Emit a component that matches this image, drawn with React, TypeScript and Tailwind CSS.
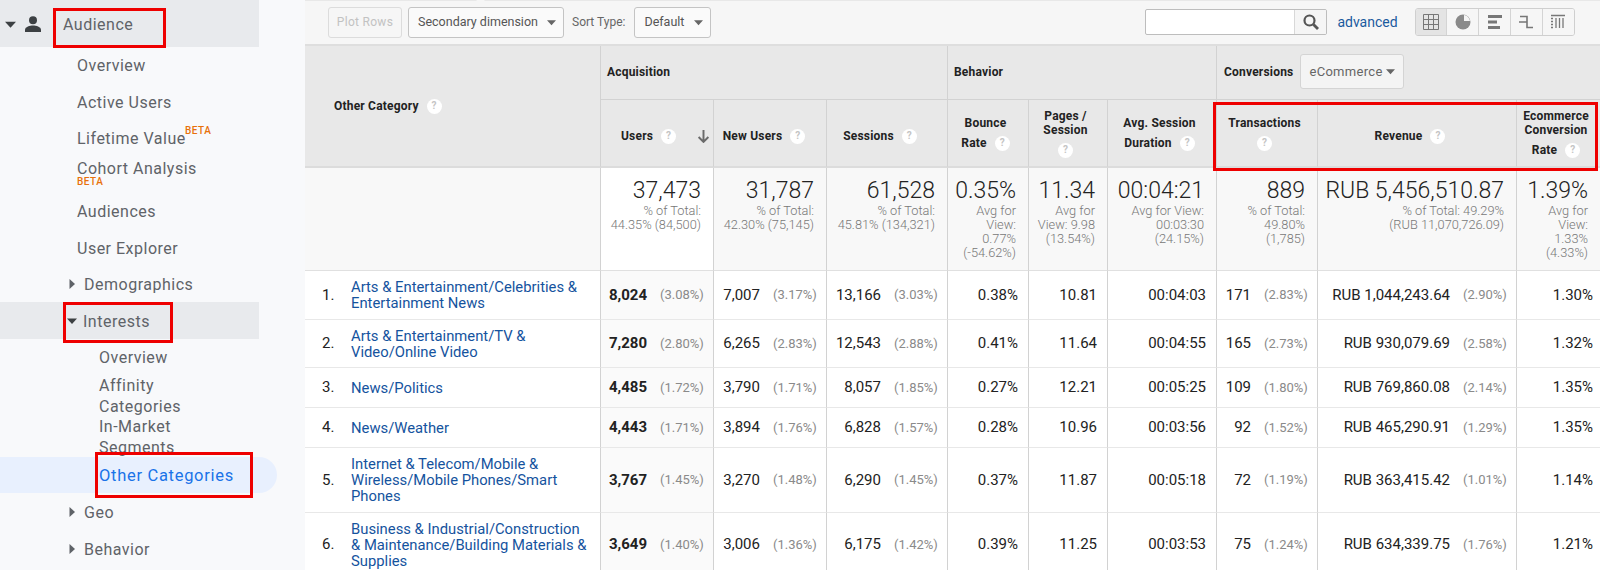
const font = { fontFamily: "Roboto, sans-serif" };

function Caret({ dir = "down", className = "" }: { dir?: "down" | "right"; className?: string }) {
  return (
    <svg viewBox="0 0 10 10" className={className} fill="currentColor" aria-hidden="true">
      {dir === "down" ? <path d="M0 2.5h10L5 8z" /> : <path d="M2.5 0v10L8 5z" />}
    </svg>
  );
}

function Help() {
  return (
    <span className="inline-flex h-[15px] w-[15px] shrink-0 items-center justify-center rounded-full bg-white text-[10px] font-bold leading-none text-[#c4c4c4]">
      ?
    </span>
  );
}

function NavRow({
  h,
  pl,
  caret,
  active,
  band,
  children,
}: {
  h: string;
  pl: string;
  caret?: "down" | "right";
  active?: boolean;
  band?: boolean;
  children: React.ReactNode;
}) {
  return (
    <div
      className={`relative flex items-center pt-[2px] ${h} ${pl} ${band ? "w-[259px] bg-[#e8eaed]" : ""} ${
        active ? "w-[277px] rounded-r-full bg-[#e8f0fe] text-[16.500px] tracking-[0.7px] text-[#1a73e8]" : ""
      }`}
    >
      {caret && (
        <Caret
          dir={caret}
          className={`absolute left-[67px] top-1/2 h-[10px] w-[10px] -translate-y-1/2 ${
            caret === "down" ? "text-[#3c4043]" : "text-[#5f6368]"
          }`}
        />
      )}
      {children}
    </div>
  );
}

function Sidebar() {
  return (
    <aside className="relative h-[570px] w-[305px] shrink-0 bg-[#f8f9fb] text-[16px] tracking-[0.5px] text-[#5f6368]" style={font}>
      <NavRow h="h-[47px]" pl="pl-[63px]" band>
        <Caret className="absolute left-[5px] top-[19px] h-[11px] w-[11px] text-[#3c4043]" />
        <svg viewBox="0 0 16 16" className="absolute left-[25px] top-[16px] h-[16px] w-[16px] text-[#3c4043]" fill="currentColor">
          <circle cx="8" cy="4.2" r="4" />
          <path d="M0 16v-2.2C0 11 5 9.6 8 9.6s8 1.4 8 4.2V16z" />
        </svg>
        Audience
      </NavRow>
      <NavRow h="h-[36px]" pl="pl-[77px]">Overview</NavRow>
      <NavRow h="h-[37px]" pl="pl-[77px]">Active Users</NavRow>
      <NavRow h="h-[36px]" pl="pl-[77px]">
        Lifetime Value
        <span className="absolute left-[185px] top-[5px] text-[10px] font-medium leading-[12px] text-[#e8710a]">BETA</span>
      </NavRow>
      <div className="h-[37px] pl-[77px] pt-[3px]">
        <div className="leading-[20px]">Cohort Analysis</div>
        <div className="text-[10px] font-medium leading-[6px] text-[#e8710a]">BETA</div>
      </div>
      <NavRow h="h-[36px]" pl="pl-[77px]">Audiences</NavRow>
      <NavRow h="h-[37px]" pl="pl-[77px]">User Explorer</NavRow>
      <NavRow h="h-[36px]" pl="pl-[84px]" caret="right">Demographics</NavRow>
      <NavRow h="h-[37px]" pl="pl-[83px]" caret="down" band>Interests</NavRow>
      <NavRow h="h-[36px]" pl="pl-[99px]">Overview</NavRow>
      <div className="h-[82px] pl-[99px] pt-[1px] leading-[20.5px]">
        <div>Affinity</div>
        <div>Categories</div>
        <div>In-Market</div>
        <div>Segments</div>
      </div>
      <NavRow h="h-[36px]" pl="pl-[99px]" active>Other Categories</NavRow>
      <NavRow h="h-[37px]" pl="pl-[84px]" caret="right">Geo</NavRow>
      <NavRow h="h-[37px]" pl="pl-[84px]" caret="right">Behavior</NavRow>
      <span className="absolute left-[53px] top-[8px] h-[40px] w-[113px] border-[3px] border-[#ee0000]" />
      <span className="absolute left-[63px] top-[302px] h-[41px] w-[110px] border-[3px] border-[#ee0000]" />
      <span className="absolute left-[95px] top-[452px] h-[46px] w-[158px] border-[3px] border-[#ee0000]" />
    </aside>
  );
}

function Select({ label, width }: { label: string; width: string }) {
  return (
    <div className={`flex h-[31px] ${width} items-center justify-between whitespace-nowrap rounded-[3px] border border-[#c4c4c4] bg-[#fafafa] pl-[9px] pr-[7px] text-[12.500px] text-[#555]`}>
      {label}
      <Caret className="h-[9px] w-[9px] text-[#666]" />
    </div>
  );
}

function ViewIcon({ i }: { i: number }) {
  const c = "#777";
  return (
    <svg viewBox="0 0 16 16" className="h-[16px] w-[16px]" fill="none" stroke={c} strokeWidth="1">
      {i === 0 && <path d="M.5.5h15v15H.5zM5.5.5v15M10.5.5v15M.5 5.5h15M.5 10.5h15" />}
      {i === 1 && (
        <>
          <circle cx="8" cy="8" r="7.5" fill="#8a8a8a" stroke="none" />
          <path d="M9 7V1a6.500 6.500 0 0 1 6 6z" fill="#f4f4f4" stroke="none" />
        </>
      )}
      {i === 2 && <path d="M1 2.500h14M1 8h9M1 13.500h12" strokeWidth="3" />}
      {i === 3 && <path d="M2 2.500h7v11h6M9 8H1" strokeWidth="1.600" />}
      {i === 4 && <path d="M1 1.500h14M1 4.500h2M1 7.500h2M1 10.500h2M1 13.500h2M6 4v10M9.500 4v10M13 4v10" strokeWidth="1.300" />}
    </svg>
  );
}

function Toolbar() {
  return (
    <div className="relative flex h-[46px] items-center border-b-2 border-t border-b-[#dedede] border-t-[#e8e8e8] bg-[#f6f6f6] pb-[1px] pl-[23px]">
      <span className="absolute left-[172px] top-[-5px] h-[7px] w-[7px] rotate-45 bg-[#f6f6f6]" />
      <div className="flex h-[31px] w-[74px] items-center justify-center rounded-[3px] border border-[#dcdcdc] text-[12px] tracking-[0.3px] text-[#c2c2c2]">
        Plot Rows
      </div>
      <div className="ml-[6px]">
        <Select label="Secondary dimension" width="w-[156px]" />
      </div>
      <span className="ml-[8px] text-[12px] text-[#666]">Sort Type:</span>
      <div className="ml-[9px]">
        <Select label="Default" width="w-[77px]" />
      </div>
      <div className="ml-[434px] flex h-[26px] w-[182px] overflow-hidden rounded-[2px] border border-[#bdbdbd] bg-white">
        <div className="flex-1" />
        <div className="flex w-[32px] items-center justify-center border-l border-[#d8d8d8] bg-[#f5f5f5]">
          <svg viewBox="0 0 16 16" className="h-[16px] w-[16px]" fill="none" stroke="#555" strokeWidth="2.200">
            <circle cx="6.500" cy="6.500" r="5" />
            <path d="M10.500 10.500L15 15" strokeWidth="2.800" />
          </svg>
        </div>
      </div>
      <span className="ml-[10px] text-[14px] text-[#1a5a9e]">advanced</span>
      <div className="ml-[17px] flex h-[28px] w-[160px] overflow-hidden rounded-[3px] border border-[#cfcfcf]">
        {[0, 1, 2, 3, 4].map((i) => (
          <div key={i} className={`flex flex-1 items-center justify-center border-l border-[#d4d4d4] first:border-l-0 ${i === 0 ? "bg-[#e4e4e4]" : "bg-[#f6f6f6]"}`}>
            <ViewIcon i={i} />
          </div>
        ))}
      </div>
    </div>
  );
}

const rows = [
  ["Arts & Entertainment/Celebrities & Entertainment News", "8,024", "(3.08%)", "7,007", "(3.17%)", "13,166", "(3.03%)", "0.38%", "10.81", "00:04:03", "171", "(2.83%)", "RUB 1,044,243.64", "(2.90%)", "1.30%", "h-[49px]"],
  ["Arts & Entertainment/TV & Video/Online Video", "7,280", "(2.80%)", "6,265", "(2.83%)", "12,543", "(2.88%)", "0.41%", "11.64", "00:04:55", "165", "(2.73%)", "RUB 930,079.69", "(2.58%)", "1.32%", "h-[48px]"],
  ["News/Politics", "4,485", "(1.72%)", "3,790", "(1.71%)", "8,057", "(1.85%)", "0.27%", "12.21", "00:05:25", "109", "(1.80%)", "RUB 769,860.08", "(2.14%)", "1.35%", "h-[40px]"],
  ["News/Weather", "4,443", "(1.71%)", "3,894", "(1.76%)", "6,828", "(1.57%)", "0.28%", "10.96", "00:03:56", "92", "(1.52%)", "RUB 465,290.91", "(1.29%)", "1.35%", "h-[40px]"],
  ["Internet & Telecom/Mobile & Wireless/Mobile Phones/Smart Phones", "3,767", "(1.45%)", "3,270", "(1.48%)", "6,290", "(1.45%)", "0.37%", "11.87", "00:05:18", "72", "(1.19%)", "RUB 363,415.42", "(1.01%)", "1.14%", "h-[65px]"],
  ["Business & Industrial/Construction & Maintenance/Building Materials & Supplies", "3,649", "(1.40%)", "3,006", "(1.36%)", "6,175", "(1.42%)", "0.39%", "11.25", "00:03:53", "75", "(1.24%)", "RUB 634,339.75", "(1.76%)", "1.21%", "h-[64px]"],
];

const totals = [
  ["37,473", ["% of Total:", "44.35% (84,500)"]],
  ["31,787", ["% of Total:", "42.30% (75,145)"]],
  ["61,528", ["% of Total:", "45.81% (134,321)"]],
  ["0.35%", ["Avg for", "View:", "0.77%", "(-54.62%)"]],
  ["11.34", ["Avg for", "View: 9.98", "(13.54%)"]],
  ["00:04:21", ["Avg for View:", "00:03:30", "(24.15%)"]],
  ["889", ["% of Total:", "49.80%", "(1,785)"]],
  ["RUB 5,456,510.87", ["% of Total: 49.29%", "(RUB 11,070,726.09)"]],
  ["1.39%", ["Avg for", "View:", "1.33%", "(4.33%)"]],
] as [string, string[]][];

const th = "border-l border-[#d2d2d2] bg-[#e8e8e8] align-middle text-[12px] font-bold leading-[14px] tracking-[0.2px] text-[#222]";

function Pair({ v, p, shade }: { v: string; p: string; shade?: boolean }) {
  return (
    <td className={`border-b border-l border-b-[#e8e8e8] border-l-[#d2d2d2] pr-[10px] ${shade ? "bg-[#fafafa] font-bold" : "bg-white"}`}>
      <div className="flex items-center justify-end gap-[13px]">
        <span>{v}</span>
        <span className="w-[43px] text-right text-[13px] font-normal text-[#8a8a8a]">{p}</span>
      </div>
    </td>
  );
}

function Val({ v, last }: { v: string; last?: boolean }) {
  return (
    <td className={`border-b border-l border-b-[#e8e8e8] border-l-[#d2d2d2] bg-white text-right ${last ? "pr-[7px]" : "pr-[10px]"}`}>
      {v}
    </td>
  );
}

function Table() {
  return (
    <table className="w-[1295px] table-fixed border-separate border-spacing-0 text-[15px] text-[#222]">
      <colgroup>
        {[295, 113, 113, 121, 81, 79, 109, 101, 199, 84].map((w, i) => (
          <col key={i} style={{ width: w }} />
        ))}
      </colgroup>
      <thead>
        <tr className="h-[54px]">
          <th rowSpan={2} className={`${th} border-b-2 border-l-0 border-b-[#dcdcdc] pl-[29px] text-left`}>
            <div className="flex items-center gap-[8px]">
              Other Category
              <Help />
            </div>
          </th>
          <th colSpan={3} className={`${th} border-b pb-[2px] pl-[6px] text-left`}>Acquisition</th>
          <th colSpan={3} className={`${th} border-b pb-[2px] pl-[6px] text-left`}>Behavior</th>
          <th colSpan={3} className={`${th} border-b pb-[2px] pl-[7px] text-left`}>
            <div className="flex items-center gap-[7px]">
              Conversions
              <div className="flex h-[35px] w-[104px] items-center justify-between rounded-[3px] border border-[#d4d4d4] bg-[#f4f4f4] pl-[8px] pr-[8px] text-[13px] font-normal tracking-[0.3px] text-[#666]">
                eCommerce
                <Caret className="h-[9px] w-[9px] text-[#666]" />
              </div>
            </div>
          </th>
        </tr>
        <tr className="h-[68px]">
          <th className={`${th} border-b-2 border-b-[#dcdcdc] pt-[6px]`}>
            <div className="flex items-center pl-[20px]">
              Users
              <span className="ml-[8px]"><Help /></span>
              <svg viewBox="0 0 12 12" className="ml-[21px] h-[13px] w-[13px]" fill="none" stroke="#6b6b6b" strokeWidth="1.800">
                <path d="M6 0v11M1.500 6.500L6 11l4.500-4.500" />
              </svg>
            </div>
          </th>
          {[
            ["New Users", "pr-[12px]"],
            ["Sessions", "pr-[14px]"],
          ].map(([t, pr]) => (
            <th key={t} className={`${th} border-b-2 border-b-[#dcdcdc] pt-[6px] ${pr}`}>
              <div className="flex items-center justify-center gap-[8px]">
                {t}
                <Help />
              </div>
            </th>
          ))}
          {[
            [["Bounce"], "Rate"],
            [["Pages /", "Session"], ""],
            [["Avg. Session"], "Duration"],
            [["Transactions"], ""],
          ].map(([l, last]) => (
            <th key={(l as string[])[0]} className={`${th} border-b-2 border-b-[#dcdcdc] pr-[5px]`}>
              <div className="flex flex-col items-center">
                {(l as string[]).map((x) => <div key={x}>{x}</div>)}
                <div className="mt-[6px] flex items-center gap-[8px]">
                  {last as string}
                  <Help />
                </div>
              </div>
            </th>
          ))}
          <th className={`${th} border-b-2 border-b-[#dcdcdc] pr-[14px] pt-[6px]`}>
            <div className="flex items-center justify-center gap-[8px]">
              Revenue
              <Help />
            </div>
          </th>
          <th className={`${th} border-b-2 border-b-[#dcdcdc] pr-[5px]`}>
            <div className="flex flex-col items-center">
              <div>Ecommerce</div>
              <div>Conversion</div>
              <div className="mt-[6px] flex items-center gap-[8px]">
                Rate
                <Help />
              </div>
            </div>
          </th>
        </tr>
      </thead>
      <tbody>
        <tr className="h-[103px]">
          <td className="border-b border-b-[#e0e0e0] bg-[#f8f8f8]" />
          {totals.map(([big, small], i) => (
            <td key={big} className={`border-b border-l border-b-[#e0e0e0] border-l-[#d2d2d2] pr-[12px] pt-[10px] text-right align-top ${i === 0 ? "bg-white" : "bg-[#f8f8f8]"}`}>
              <div className="text-[23px] font-light leading-[26px] text-[#222]">{big}</div>
              {small.map((s) => (
                <div key={s} className="text-[12.800px] font-light leading-[14px] text-[#777]">{s}</div>
              ))}
            </td>
          ))}
        </tr>
        {rows.map((r, i) => (
          <tr key={r[0]} className={r[15]}>
            <td className="border-b border-b-[#e8e8e8] bg-white">
              <div className="flex items-center">
                <span className="w-[46px] pl-[17px]">{i + 1}.</span>
                <a className="w-[240px] text-[14.800px] leading-[16px] text-[#15539e]">{r[0]}</a>
              </div>
            </td>
            <Pair v={r[1]} p={r[2]} shade />
            <Pair v={r[3]} p={r[4]} />
            <Pair v={r[5]} p={r[6]} />
            <Val v={r[7]} />
            <Val v={r[8]} />
            <Val v={r[9]} />
            <Pair v={r[10]} p={r[11]} />
            <Pair v={r[12]} p={r[13]} />
            <Val v={r[14]} last />
          </tr>
        ))}
      </tbody>
    </table>
  );
}

export default function App() {
  return (
    <div className="relative flex h-[570px] w-[1600px] overflow-hidden bg-white" style={font}>
      <Sidebar />
      <main className="w-[1295px] shrink-0">
        <Toolbar />
        <Table />
      </main>
      <span className="absolute left-[1213px] top-[102px] h-[69px] w-[385px] border-[3px] border-[#ee0000]" />
    </div>
  );
}
